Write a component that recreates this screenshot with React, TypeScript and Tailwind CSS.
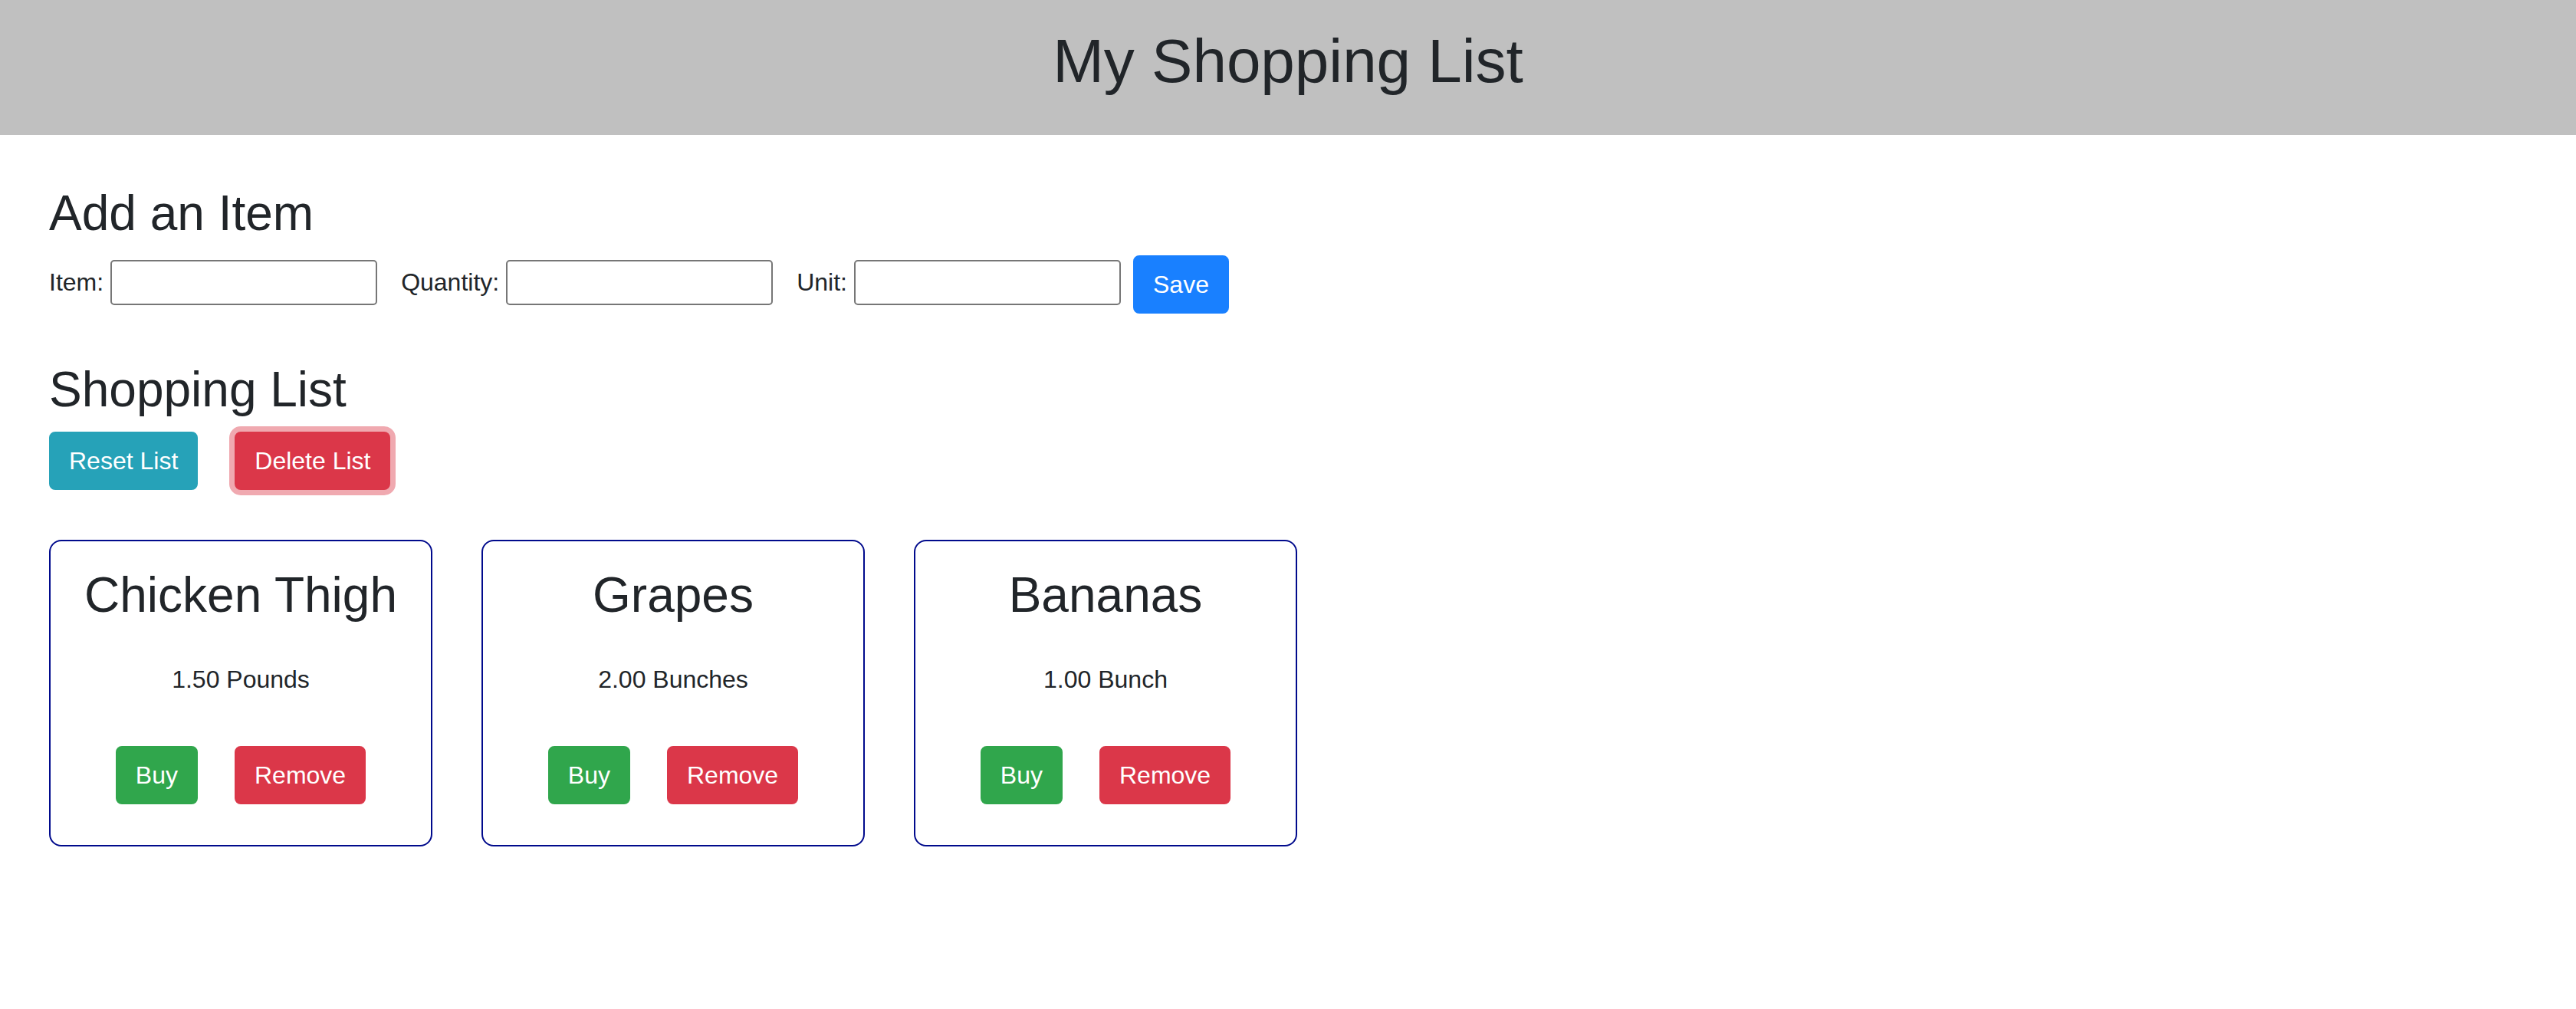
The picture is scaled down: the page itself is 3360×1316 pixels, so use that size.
import React from "react";

const items = [
  { name: "Chicken Thigh", qty: "1.50 Pounds" },
  { name: "Grapes", qty: "2.00 Bunches" },
  { name: "Bananas", qty: "1.00 Bunch" },
];

function Card({ name, qty }: { name: string; qty: string }) {
  return (
    <div className="flex h-[400px] w-[500px] flex-col items-center rounded-[16px] border-2 border-[#000a8c] pt-[32px]">
      <h3 className="text-[64px] font-normal leading-[76.8px]">{name}</h3>
      <p className="mt-[48px] text-[32px] leading-[48px] text-[#212529]">{qty}</p>
      <div className="mt-[63px] flex gap-[48px]">
        <button className="h-[76px] rounded-[8px] border-2 border-[#30a64c] bg-[#30a64c] px-[24px] text-[32px] leading-[48px] text-white">
          Buy
        </button>
        <button className="h-[76px] rounded-[8px] border-2 border-[#db3749] bg-[#db3749] px-[24px] text-[32px] leading-[48px] text-white">
          Remove
        </button>
      </div>
    </div>
  );
}

export default function App() {
  return (
    <div className="min-h-screen bg-white font-['Liberation_Sans',Arial,sans-serif] text-[#212529]">
      <header className="h-[176px] bg-[#c0c0c0] pt-[32px] text-center">
        <h1 className="text-[80px] font-normal leading-[96px]">My Shopping List</h1>
      </header>
      <main className="px-[64px]">
        <h2 className="mt-[64px] text-[64px] font-normal leading-[76.8px]">Add an Item</h2>
        <div className="mt-[16px] flex items-start">
          <label className="mt-[11px] text-[32px] leading-[48px]">Item:</label>
          <input className="ml-[9px] mt-[6px] h-[59px] w-[348px] rounded-[5px] border-2 border-[#767676] bg-white" />
          <label className="ml-[31px] mt-[11px] text-[32px] leading-[48px]">Quantity:</label>
          <input className="ml-[9px] mt-[6px] h-[59px] w-[348px] rounded-[5px] border-2 border-[#767676] bg-white" />
          <label className="ml-[31px] mt-[11px] text-[32px] leading-[48px]">Unit:</label>
          <input className="ml-[9px] mt-[6px] h-[59px] w-[348px] rounded-[5px] border-2 border-[#767676] bg-white" />
          <button className="ml-[16px] h-[76px] rounded-[8px] border-2 border-[#1980ff] bg-[#1980ff] px-[24px] text-[32px] leading-[48px] text-white">
            Save
          </button>
        </div>
        <h2 className="mt-[61px] text-[64px] font-normal leading-[76.8px]">Shopping List</h2>
        <div className="mt-[16px] flex gap-[48px]">
          <button className="h-[76px] rounded-[8px] border-2 border-[#26a2b8] bg-[#26a2b8] px-[24px] text-[32px] leading-[48px] text-white">
            Reset List
          </button>
          <button className="h-[76px] rounded-[8px] border-2 border-[#db3749] bg-[#db3749] px-[24px] text-[32px] leading-[48px] text-white shadow-[0_0_0_7px_#f0a9b0]">
            Delete List
          </button>
        </div>
        <div className="mt-[65px] flex gap-[64px]">
          {items.map((it) => (
            <Card key={it.name} name={it.name} qty={it.qty} />
          ))}
        </div>
      </main>
    </div>
  );
}
